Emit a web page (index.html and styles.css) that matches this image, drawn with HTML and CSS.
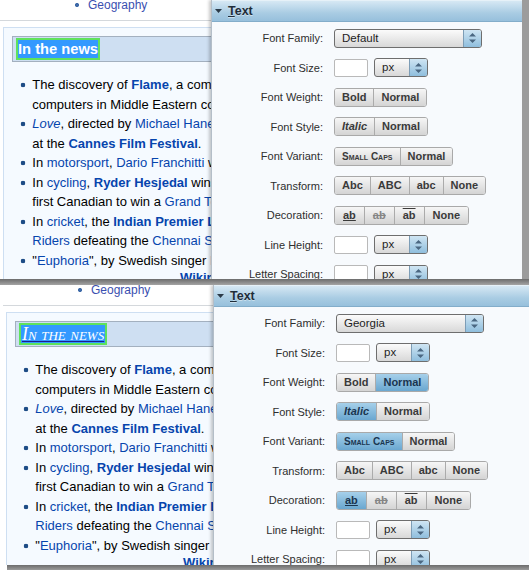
FILE: index.html
```html
<!DOCTYPE html>
<html lang="en">
<head>
  <meta charset="UTF-8" />
  <title>Text style editor</title>
  <link rel="stylesheet" href="styles.css">
</head>
<body>

  <!-- BEFORE: default text settings -->
  <div class="shot shot-before">
    <div class="wiki">
      <ul class="portals"><li><a href="#">Geography</a></li></ul>
      <div class="news">
        <h2 class="news-head"><span class="picked">In the news</span></h2>
        <ul class="news-list">
          <li>The discovery of <a class="b" href="#">Flame</a>, a complex piece of cyber-espionage malware targeting<br>computers in Middle Eastern countries, is announced.</li>
          <li><a href="#"><i>Love</i></a>, directed by <a href="#">Michael Haneke</a>, wins the <a href="#">Palme d'Or</a><br>at the <a class="b" href="#">Cannes Film Festival</a>.</li>
          <li>In <a href="#">motorsport</a>, <a href="#">Dario Franchitti</a> wins the <a href="#">Indianapolis 500</a>.</li>
          <li>In <a href="#">cycling</a>, <a class="b" href="#">Ryder Hesjedal</a> wins the <a href="#">Giro d'Italia</a>, the<br>first Canadian to win a <a href="#">Grand Tour</a> race.</li>
          <li>In <a href="#">cricket</a>, the <a class="b" href="#">Indian Premier League</a> concludes with the <a href="#">Kolkata Knight</a><br><a href="#">Riders</a> defeating the <a href="#">Chennai Super Kings</a> in the final.</li>
          <li>"<a href="#">Euphoria</a>", by Swedish singer <a href="#">Loreen</a>, wins the Eurovision Song Contest.</li>
        </ul>
        <div class="news-more"><a class="b" href="#">Wikinews</a> – <a href="#">Recent deaths</a></div>
      </div>
    </div>

    <div class="panel">
      <div class="panel-head">
        <svg class="caret" width="7" height="4" viewBox="0 0 7 4"><path d="M0 0h7L3.5 4z"/></svg>
        <span><u>T</u>ext</span>
      </div>
      <div class="props">
        <label>Font Family:</label>
        <div class="select wide"><span class="val">Default</span><span class="spin"><svg width="7" height="10" viewBox="0 0 7 10"><path d="M3.5 0L7 3.5H0zM0 6.5h7L3.5 10z"/></svg></span></div>

        <label>Font Size:</label>
        <div class="pair"><span class="field"></span><div class="select unit"><span class="val">px</span><span class="spin"><svg width="7" height="10" viewBox="0 0 7 10"><path d="M3.5 0L7 3.5H0zM0 6.5h7L3.5 10z"/></svg></span></div></div>

        <label>Font Weight:</label>
        <div class="seg"><span>Bold</span><span>Normal</span></div>

        <label>Font Style:</label>
        <div class="seg"><span class="it">Italic</span><span>Normal</span></div>

        <label>Font Variant:</label>
        <div class="seg"><span class="sc">Small Caps</span><span>Normal</span></div>

        <label>Transform:</label>
        <div class="seg"><span>Abc</span><span>ABC</span><span>abc</span><span>None</span></div>

        <label>Decoration:</label>
        <div class="seg deco"><span class="ul">ab</span><span class="lt">ab</span><span class="ov">ab</span><span>None</span></div>

        <label>Line Height:</label>
        <div class="pair"><span class="field"></span><div class="select unit"><span class="val">px</span><span class="spin"><svg width="7" height="10" viewBox="0 0 7 10"><path d="M3.5 0L7 3.5H0zM0 6.5h7L3.5 10z"/></svg></span></div></div>

        <label>Letter Spacing:</label>
        <div class="pair"><span class="field"></span><div class="select unit"><span class="val">px</span><span class="spin"><svg width="7" height="10" viewBox="0 0 7 10"><path d="M3.5 0L7 3.5H0zM0 6.5h7L3.5 10z"/></svg></span></div></div>
      </div>
    </div>
  </div>
  <div class="shot-edge"></div>

  <!-- AFTER: Georgia, italic small caps, underlined -->
  <div class="shot shot-after">
    <div class="wiki">
      <ul class="portals"><li><a href="#">Geography</a></li></ul>
      <div class="news">
        <h2 class="news-head"><span class="picked styled">In the news</span></h2>
        <ul class="news-list">
          <li>The discovery of <a class="b" href="#">Flame</a>, a complex piece of cyber-espionage malware targeting<br>computers in Middle Eastern countries, is announced.</li>
          <li><a href="#"><i>Love</i></a>, directed by <a href="#">Michael Haneke</a>, wins the <a href="#">Palme d'Or</a><br>at the <a class="b" href="#">Cannes Film Festival</a>.</li>
          <li>In <a href="#">motorsport</a>, <a href="#">Dario Franchitti</a> wins the <a href="#">Indianapolis 500</a>.</li>
          <li>In <a href="#">cycling</a>, <a class="b" href="#">Ryder Hesjedal</a> wins the <a href="#">Giro d'Italia</a>, the<br>first Canadian to win a <a href="#">Grand Tour</a> race.</li>
          <li>In <a href="#">cricket</a>, the <a class="b" href="#">Indian Premier League</a> concludes with the <a href="#">Kolkata Knight</a><br><a href="#">Riders</a> defeating the <a href="#">Chennai Super Kings</a> in the final.</li>
          <li>"<a href="#">Euphoria</a>", by Swedish singer <a href="#">Loreen</a>, wins the Eurovision Song Contest.</li>
        </ul>
        <div class="news-more"><a class="b" href="#">Wikinews</a> – <a href="#">Recent deaths</a></div>
      </div>
    </div>

    <div class="panel">
      <div class="panel-head">
        <svg class="caret" width="7" height="4" viewBox="0 0 7 4"><path d="M0 0h7L3.5 4z"/></svg>
        <span><u>T</u>ext</span>
      </div>
      <div class="props">
        <label>Font Family:</label>
        <div class="select wide"><span class="val">Georgia</span><span class="spin"><svg width="7" height="10" viewBox="0 0 7 10"><path d="M3.5 0L7 3.5H0zM0 6.5h7L3.5 10z"/></svg></span></div>

        <label>Font Size:</label>
        <div class="pair"><span class="field"></span><div class="select unit"><span class="val">px</span><span class="spin"><svg width="7" height="10" viewBox="0 0 7 10"><path d="M3.5 0L7 3.5H0zM0 6.5h7L3.5 10z"/></svg></span></div></div>

        <label>Font Weight:</label>
        <div class="seg"><span>Bold</span><span class="on">Normal</span></div>

        <label>Font Style:</label>
        <div class="seg"><span class="it on">Italic</span><span>Normal</span></div>

        <label>Font Variant:</label>
        <div class="seg"><span class="sc on">Small Caps</span><span>Normal</span></div>

        <label>Transform:</label>
        <div class="seg"><span>Abc</span><span>ABC</span><span>abc</span><span>None</span></div>

        <label>Decoration:</label>
        <div class="seg deco"><span class="ul on">ab</span><span class="lt">ab</span><span class="ov">ab</span><span>None</span></div>

        <label>Line Height:</label>
        <div class="pair"><span class="field"></span><div class="select unit"><span class="val">px</span><span class="spin"><svg width="7" height="10" viewBox="0 0 7 10"><path d="M3.5 0L7 3.5H0zM0 6.5h7L3.5 10z"/></svg></span></div></div>

        <label>Letter Spacing:</label>
        <div class="pair"><span class="field"></span><div class="select unit"><span class="val">px</span><span class="spin"><svg width="7" height="10" viewBox="0 0 7 10"><path d="M3.5 0L7 3.5H0zM0 6.5h7L3.5 10z"/></svg></span></div></div>
      </div>
    </div>
  </div>
  <div class="shot-edge after"></div>

</body>
</html>
```

FILE: styles.css
```css
*, *::before, *::after {
  margin: 0;
  padding: 0;
  box-sizing: border-box;
}

html, body {
  width: 529px;
  height: 570px;
  overflow: hidden;
  background: #fff;
}

/* SHOTS */
.shot {
  position: relative;
  height: 279px;
  overflow: hidden;
  background: #fff;
}
.shot-before {
  width: 522px;
  box-shadow: 7px 0 0 #9c9c9c;
}
.shot-after {
  width: 529px;
  height: 280px;
}
.shot-edge {
  height: 6px;
  background: linear-gradient(#6c6c6c, #a4a4a4);
}
.shot-edge.after { margin-left: 7px; }

/* WIKI PAGE (only the strip left of the panel shows) */
.wiki {
  width: 212px;
  height: 100%;
  overflow: hidden;
  font-family: 'Liberation Sans', Arial, sans-serif;
  font-size: 13px;
  color: #000;
}
.shot-after .wiki { padding-left: 3px; width: 214px; }
.wiki a { color: #0645ad; text-decoration: none; }
.wiki a.b { font-weight: bold; }

.portals {
  list-style: none;
  height: 22px;
  border-bottom: 1px solid #d4d8dc;
  font-size: 12px;
  line-height: 12px;
}
.portals li {
  margin-left: 74px;
  padding-left: 14px;
  margin-top: -1px;
  background: radial-gradient(circle, #3e6aa8 1.8px, transparent 2.3px) 0 3px / 6px 6px no-repeat;
}
.portals a { color: #3a4fb0; }

.news {
  margin: 6px 0 0 3px;
  border: 1px solid #cedff2;
  background: #f5faff;
  padding: 8px;
  width: 700px;
  height: 400px;
}
.news-head {
  height: 26px;
  border: 1px solid #a3b0bf;
  background: #cedff2;
  padding: 1px 0 0 3px;
  font-size: 14.7px;
  line-height: 18px;
  font-weight: bold;
}
.picked {
  display: inline-block;
  border: 2px solid #5fe25c;
  background: #3399ff;
  color: #fff;
}
.picked.styled {
  font-family: 'Liberation Serif', 'DejaVu Serif', serif;
  font-weight: normal;
  font-style: italic;
  font-variant: small-caps;
  font-size: 18px;
  padding: 0 1px;
  text-decoration: underline;
  text-decoration-color: #1b1f8f;
  text-underline-offset: 1px;
}

.news-list {
  list-style: none;
  margin: 13px 0 0 7.5px;
  line-height: 19.5px;
  white-space: nowrap;
}
.news-list li {
  padding-left: 12.8px;
  background: radial-gradient(circle, #1d4c86 2px, transparent 2.6px) 0 7px / 6px 6px no-repeat;
}
.news-more {
  margin: -2px 0 0 168px;
  line-height: 19.5px;
  white-space: nowrap;
}

/* TEXT PANEL */
.panel {
  position: absolute;
  top: 0; bottom: 0;
  left: 211px;
  right: 0;
  background: #f7fafd;
  border-left: 1px solid #b4bec8;
  box-shadow: -2px 0 3px rgba(0,0,0,0.22);
  font-family: 'Liberation Sans', Arial, sans-serif;
  color: #2c2c2c;
}
.shot-after .panel { left: 213px; }

.panel-head {
  height: 22px;
  display: flex;
  align-items: center;
  gap: 6px;
  padding-left: 3px;
  background: linear-gradient(#d6e8f4, #a9cce3 60%, #97c0dc);
  border-top: 1px solid #e6f1f8;
  border-bottom: 1px solid #83adca;
  font-size: 12.5px;
  font-weight: bold;
  color: #1f2d3a;
  text-shadow: 0 1px 0 rgba(255,255,255,0.45);
}
.caret { fill: #2b3a48; }

.props {
  display: grid;
  grid-template-columns: 111px auto;
  grid-auto-rows: 29.5px;
  column-gap: 11px;
  align-items: center;
  justify-items: start;
  padding-top: 1.25px;
  font-size: 11px;
}
.props label {
  justify-self: end;
  color: #2e2e2e;
}

/* drop-down */
.select {
  display: flex;
  height: 19px;
  border: 1px solid #6e6e6e;
  border-radius: 3px;
  overflow: hidden;
  background: linear-gradient(#fbfbfb, #d8d8d8);
  font-size: 11.5px;
  color: #1e1e1e;
}
.select.wide { width: 148px; }
.select.unit { width: 54px; }
.select .val {
  flex: 1;
  padding-left: 7px;
  line-height: 17px;
}
.select .spin {
  width: 18px;
  display: flex;
  align-items: center;
  justify-content: center;
  border-left: 1px solid #7d9db6;
  background: linear-gradient(#cfe5f3, #8fbedd);
}
.select .spin svg { fill: #4a6781; }

.pair {
  display: flex;
  gap: 6px;
  align-items: center;
}
.field {
  width: 34px;
  height: 18px;
  border: 1px solid #b9b9b9;
  border-radius: 2px;
  background: #fff;
}

/* segmented buttons */
.seg {
  display: flex;
  height: 19px;
  border: 1px solid #a9a9a9;
  border-radius: 3px;
  overflow: hidden;
}
.seg span {
  padding: 0 7px;
  line-height: 17px;
  font-weight: bold;
  color: #3a3a3a;
  background: linear-gradient(#f6f6f6, #d4d4d4);
  border-left: 1px solid #ababab;
}
.seg span:first-child { border-left: 0; }
.seg .it { font-style: italic; }
.seg .sc { font-variant: small-caps; font-size: 10px; }
.seg span.on {
  background: linear-gradient(#a6d0ea, #6aa7d0);
  color: #1a3550;
}
.deco span { padding: 0 8px; }
.deco .ul { text-decoration: underline; }
.deco .lt { text-decoration: line-through; color: #858585; }
.deco .ov { text-decoration: overline; }
```
